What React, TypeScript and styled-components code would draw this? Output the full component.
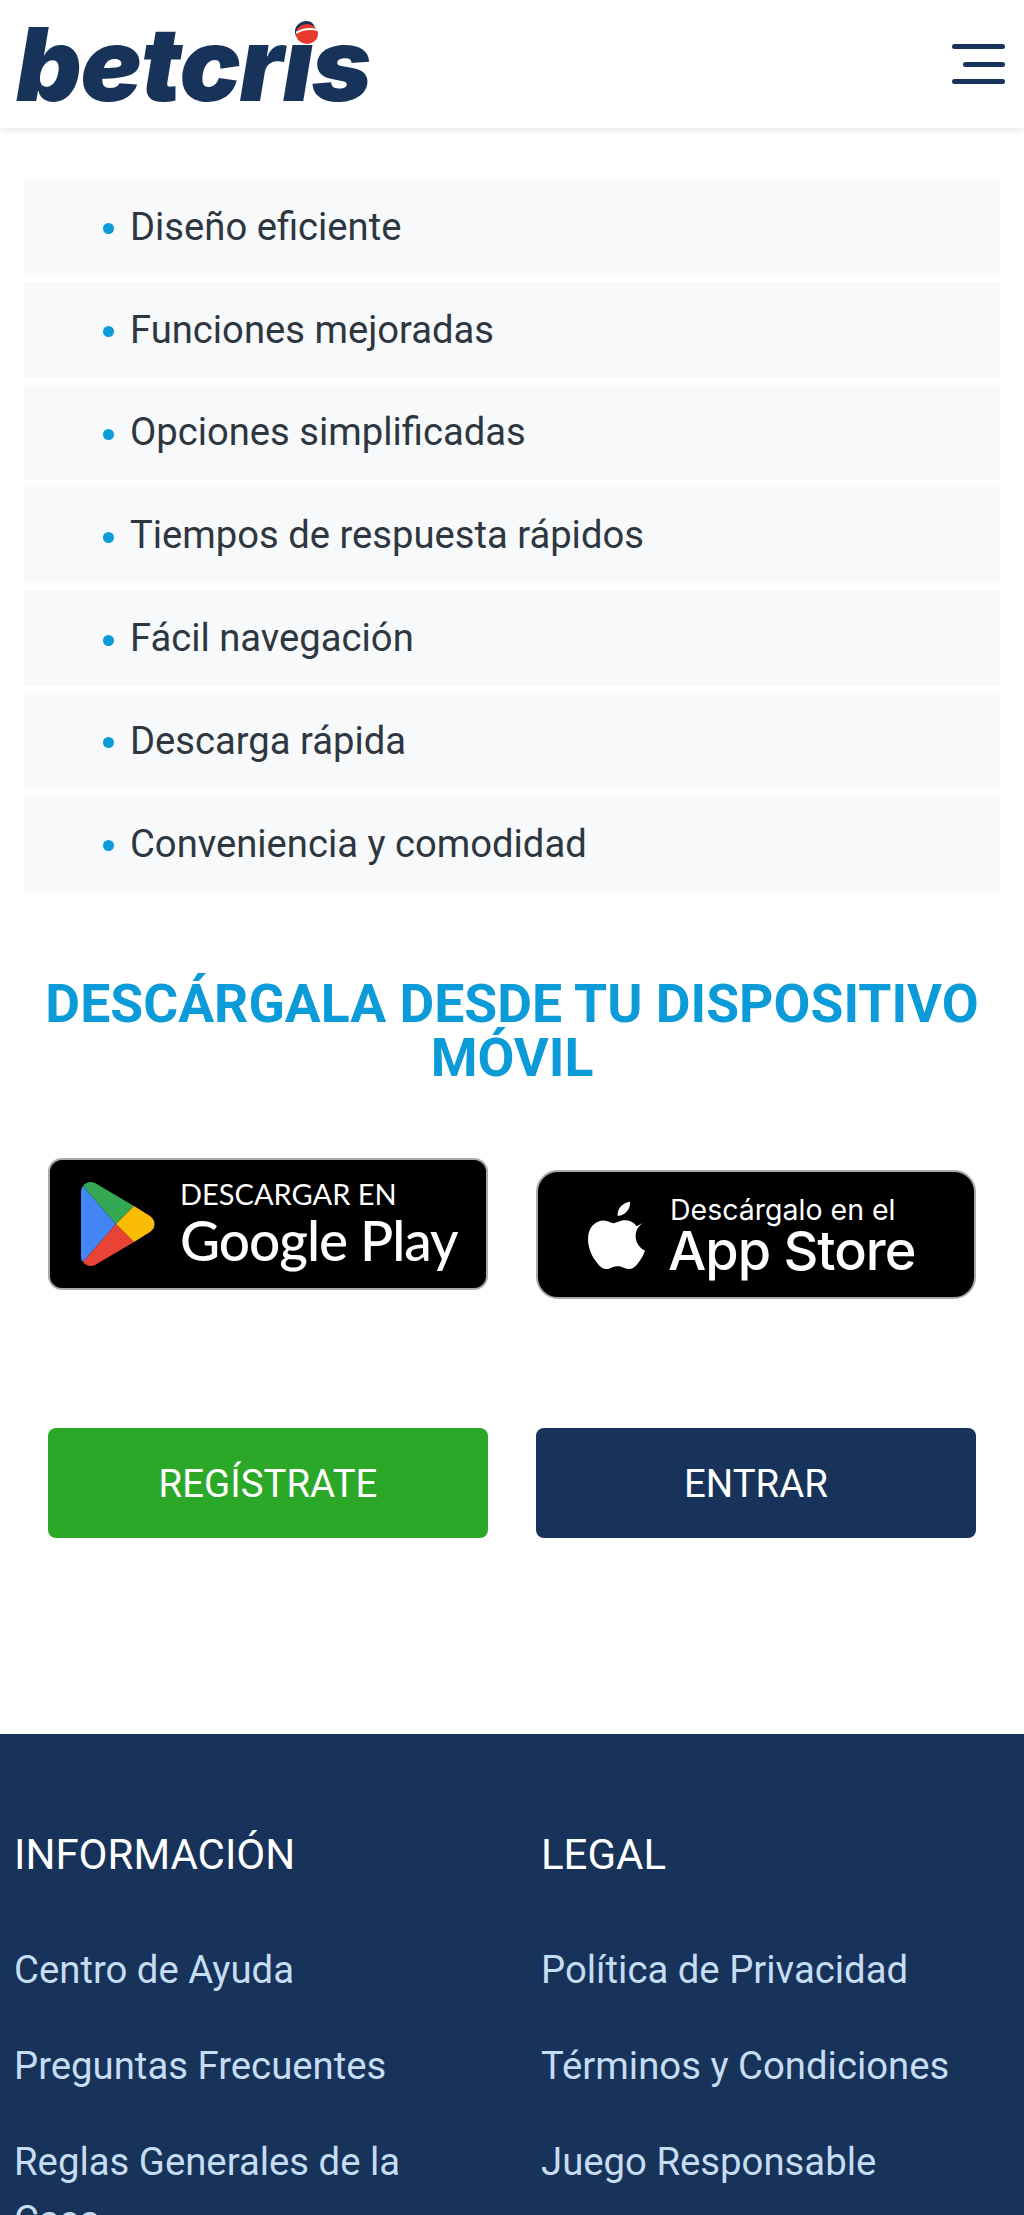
import styled, { createGlobalStyle } from "styled-components";

const GlobalStyle = createGlobalStyle`
  * {
    box-sizing: border-box;
  }
  html, body {
    margin: 0;
    padding: 0;
    background: #fff;
    font-family: Roboto, "Liberation Sans", sans-serif;
  }
  body {
    height: 2215px;
    overflow: hidden;
  }
`;

const Header = styled.header`
  height: 128px;
  display: flex;
  align-items: center;
  justify-content: space-between;
  padding: 0 19px 0 16px;
  background: #fff;
  box-shadow: 0 2px 8px rgba(0, 0, 0, 0.1);
`;

const Logo = styled.div`
  position: relative;
  height: 128px;
  display: flex;
  align-items: center;
`;

const LogoText = styled.span`
  font-family: Inter, sans-serif;
  font-size: 102px;
  font-weight: 900;
  font-style: italic;
  letter-spacing: -1.2px;
  color: #17335a;
  line-height: 1;
`;

const LogoDot = styled.svg`
  position: absolute;
  left: 280px;
  top: 24px;
  width: 22px;
  height: 20px;
`;

const MenuButton = styled.button`
  width: 54px;
  height: 40px;
  padding: 0;
  border: 0;
  background: none;
  display: flex;
  flex-direction: column;
  justify-content: space-between;
  align-items: flex-end;
`;

const MenuBar = styled.span<{ $short?: boolean }>`
  display: block;
  height: 5px;
  border-radius: 3px;
  background: #17335a;
  width: ${(p) => (p.$short ? "42px" : "53px")};
`;

const Features = styled.ul`
  list-style: none;
  margin: 51px 24px 0;
  padding: 0;
  display: flex;
  flex-direction: column;
  gap: 7px;
`;

const Feature = styled.li`
  height: 95.8px;
  display: flex;
  align-items: center;
  gap: 16px;
  padding-left: 79px;
  background: #f7f9fb;
  color: #2e3640;
  font-size: 38.2px;
`;

const Bullet = styled.span`
  width: 11px;
  height: 11px;
  margin-top: 4px;
  border-radius: 50%;
  background: #0a9bd8;
`;

const Heading = styled.h2`
  margin: 85px 24px 0;
  text-align: center;
  color: #0a9bd8;
  font-size: 53.5px;
  line-height: 54.5px;
  font-weight: 700;
`;

const Stores = styled.div`
  display: grid;
  grid-template-columns: 1fr 1fr;
  gap: 48px;
  padding: 0 48px;
  margin-top: 72px;
  align-items: start;
`;

const StoreBadge = styled.a<{ $height: number; $top: number; $radius: number }>`
  height: ${(p) => p.$height}px;
  margin-top: ${(p) => p.$top}px;
  display: flex;
  align-items: center;
  background: #000;
  border: 2.5px solid #a6a9ae;
  border-radius: ${(p) => p.$radius}px;
  color: #fff;
  text-decoration: none;
`;

const PlayIcon = styled.svg`
  width: 74px;
  height: 84px;
  margin-left: 31px;
  flex-shrink: 0;
`;

const AppleIcon = styled.svg`
  width: 59px;
  height: 70px;
  margin-left: 49px;
  flex-shrink: 0;
`;

const BadgeText = styled.div<{ $gap: number; $down?: number }>`
  display: flex;
  flex-direction: column;
  margin-left: ${(p) => p.$gap}px;
  padding-top: ${(p) => p.$down ?? 0}px;
`;

const BadgeSmall = styled.span<{ $apple?: boolean }>`
  font-family: ${(p) => (p.$apple ? "Inter, sans-serif" : "Lato, sans-serif")};
  font-size: ${(p) => (p.$apple ? "28.5px" : "29px")};
  line-height: ${(p) => (p.$apple ? "30px" : "34px")};
  margin-left: ${(p) => (p.$apple ? "2px" : "0")};
`;

const BadgeLarge = styled.span<{ $apple?: boolean }>`
  font-family: ${(p) => (p.$apple ? "Inter, sans-serif" : "Lato, sans-serif")};
  font-size: ${(p) => (p.$apple ? "54px" : "55px")};
  font-weight: 500;
  line-height: ${(p) => (p.$apple ? "52px" : "59px")};
  letter-spacing: -1px;
`;

const Actions = styled.div`
  display: grid;
  grid-template-columns: 1fr 1fr;
  gap: 48px;
  padding: 0 48px;
  margin-top: 129px;
`;

const ActionButton = styled.a<{ $color: string }>`
  height: 110px;
  padding-top: 2px;
  display: flex;
  align-items: center;
  justify-content: center;
  border-radius: 8px;
  background: ${(p) => p.$color};
  color: #fff;
  font-size: 38.4px;
  text-decoration: none;
`;

const Footer = styled.footer`
  margin-top: 196px;
  background: #17335a;
  height: 600px;
  padding: 99px 15px 0 14px;
  display: grid;
  grid-template-columns: 527px 1fr;
`;

const FooterColumn = styled.div`
  display: flex;
  flex-direction: column;
`;

const FooterTitle = styled.h3`
  margin: 0 0 64px;
  color: #fff;
  font-size: 42px;
  line-height: 44px;
  font-weight: 400;
`;

const FooterLink = styled.a`
  display: block;
  max-width: 440px;
  margin-bottom: 38px;
  color: #c6dcf2;
  font-size: 38.3px;
  line-height: 58px;
  text-decoration: none;
`;

const features = [
  "Diseño eficiente",
  "Funciones mejoradas",
  "Opciones simplificadas",
  "Tiempos de respuesta rápidos",
  "Fácil navegación",
  "Descarga rápida",
  "Conveniencia y comodidad",
];

const infoLinks = ["Centro de Ayuda", "Preguntas Frecuentes", "Reglas Generales de la Casa"];
const legalLinks = ["Política de Privacidad", "Términos y Condiciones", "Juego Responsable"];

export default function App() {
  return (
    <>
      <GlobalStyle />
      <Header>
        <Logo>
          <LogoText>betcris</LogoText>
          <LogoDot viewBox="0 0 22 20">
            <ellipse cx="11" cy="10" rx="11" ry="10" fill="#e8392d" />
            <path d="M0 9 C6 5 14 4 22 6" stroke="#fff" strokeWidth="2" fill="none" />
          </LogoDot>
        </Logo>
        <MenuButton aria-label="Menu">
          <MenuBar />
          <MenuBar $short />
          <MenuBar />
        </MenuButton>
      </Header>

      <Features>
        {features.map((f) => (
          <Feature key={f}>
            <Bullet />
            {f}
          </Feature>
        ))}
      </Features>

      <Heading>DESCÁRGALA DESDE TU DISPOSITIVO MÓVIL</Heading>

      <Stores>
        <StoreBadge $height={132} $top={0} $radius={14} href="#">
          <PlayIcon viewBox="0 0 74 84">
            <path d="M2 4 L35 42 L2 80 C0 78 0 76 0 73 V11 C0 8 0 6 2 4Z" fill="#4285f4" />
            <path d="M2 4 C5 0 10 -1 14 1 L53 24 L35 42 Z" fill="#34a853" />
            <path d="M2 80 C5 84 10 85 14 83 L53 60 L35 42 Z" fill="#ea4335" />
            <path d="M53 24 L69 34 C75 38 75 46 69 50 L53 60 L35 42 Z" fill="#fbbc04" />
          </PlayIcon>
          <BadgeText $gap={25}>
            <BadgeSmall>DESCARGAR EN</BadgeSmall>
            <BadgeLarge>Google Play</BadgeLarge>
          </BadgeText>
        </StoreBadge>
        <StoreBadge $height={129} $top={12} $radius={22} href="#">
          <AppleIcon viewBox="0 0 814 1000">
            <path
              fill="#fff"
              d="M788 341c-6 4-108 62-108 190 0 149 130 201 134 203-1 3-21 72-69 142-43 62-87 124-156 124s-86-40-165-40c-77 0-104 41-167 41s-107-58-157-128C42 790 0 677 0 570c0-172 112-263 222-263 58 0 107 38 144 38 35 0 89-40 155-40 25 0 115 2 174 86l93-50zM554 180c27-33 47-78 47-124 0-6-1-13-2-18-44 2-97 30-129 67-25 28-48 73-48 119 0 7 1 14 2 16 3 1 8 1 12 1 40 0 90-27 118-61z"
            />
          </AppleIcon>
          <BadgeText $gap={22} $down={3}>
            <BadgeSmall $apple>Descárgalo en el</BadgeSmall>
            <BadgeLarge $apple>App Store</BadgeLarge>
          </BadgeText>
        </StoreBadge>
      </Stores>

      <Actions>
        <ActionButton $color="#2ca829" href="#">REGÍSTRATE</ActionButton>
        <ActionButton $color="#17335a" href="#">ENTRAR</ActionButton>
      </Actions>

      <Footer>
        <FooterColumn>
          <FooterTitle>INFORMACIÓN</FooterTitle>
          {infoLinks.map((l) => (
            <FooterLink key={l} href="#">{l}</FooterLink>
          ))}
        </FooterColumn>
        <FooterColumn>
          <FooterTitle>LEGAL</FooterTitle>
          {legalLinks.map((l) => (
            <FooterLink key={l} href="#">{l}</FooterLink>
          ))}
        </FooterColumn>
      </Footer>
    </>
  );
}
